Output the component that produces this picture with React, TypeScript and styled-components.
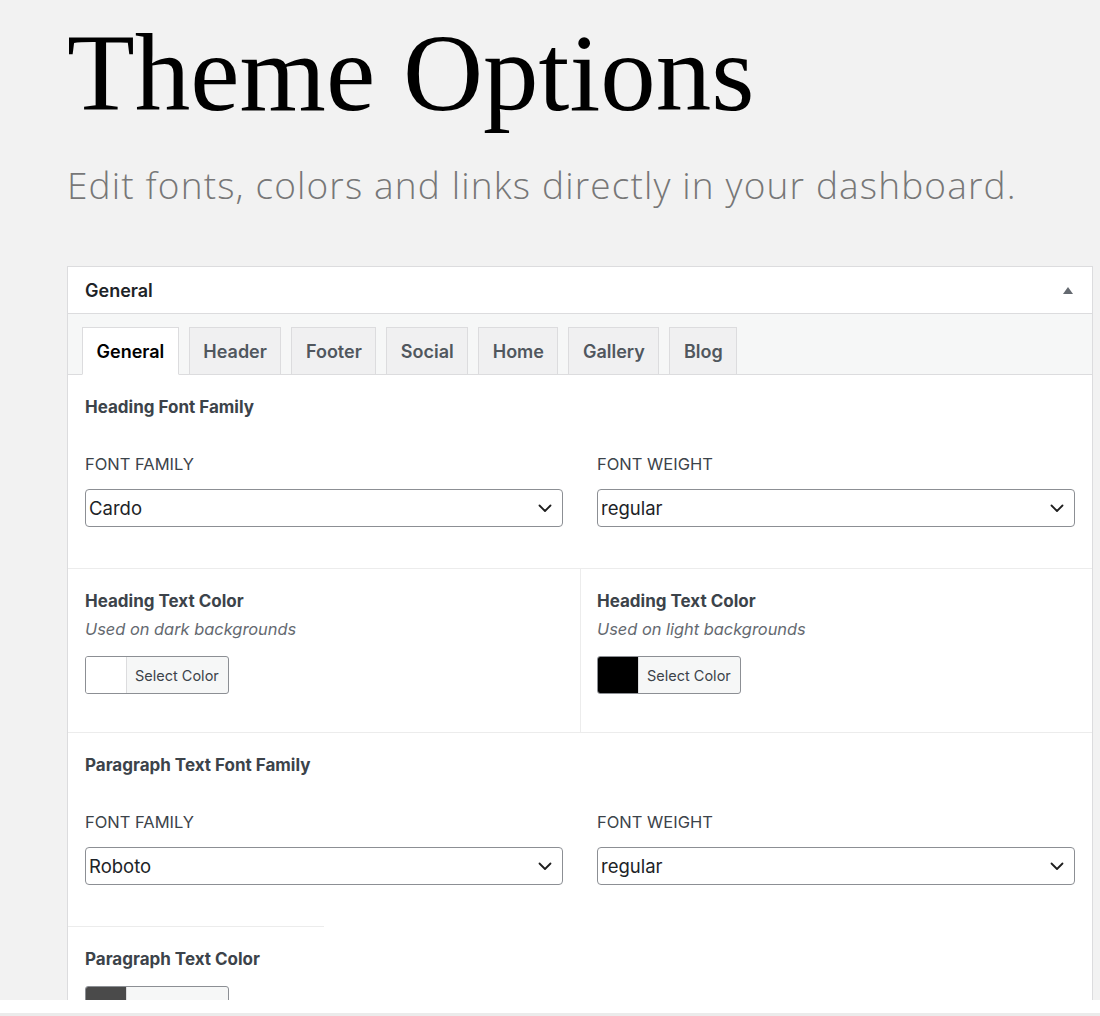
import React from 'react';
import styled, { createGlobalStyle } from 'styled-components';

const GlobalStyle = createGlobalStyle`
  body {
    margin: 0;
    background: #f2f2f2;
    font-family: Inter, "Liberation Sans", Arial, sans-serif;
  }
`;

const Page = styled.div`
  width: 1100px;
  height: 1016px;
  display: flex;
  flex-direction: column;
`;

const Main = styled.div`
  flex: 1;
  overflow: hidden;
  padding-left: 67px;
`;

const Title = styled.h1`
  margin: 0;
  padding-top: 17px;
  font-family: "Liberation Serif", "Times New Roman", serif;
  font-weight: 400;
  font-size: 111px;
  line-height: 1;
  color: #000;
`;

const Subtitle = styled.p`
  margin: 35px 0 0;
  font-family: "Open Sans", sans-serif;
  font-weight: 300;
  font-size: 37px;
  line-height: 1.2;
  letter-spacing: 1.15px;
  color: #777;
`;

const Panel = styled.div`
  margin-top: 59px;
  width: 1024px;
  background: #fff;
  border: 1px solid #dcdcde;
`;

const PanelHead = styled.div`
  height: 46px;
  padding: 0 17px;
  display: flex;
  align-items: center;
  justify-content: space-between;
  border-bottom: 1px solid #dcdcde;
  font-size: 18px;
  font-weight: 600;
  color: #1d2327;
`;

const Caret = styled.span`
  width: 0;
  height: 0;
  margin-right: 2px;
  border-left: 5px solid transparent;
  border-right: 5px solid transparent;
  border-bottom: 7px solid #646970;
`;

const TabStrip = styled.div`
  display: flex;
  gap: 10px;
  padding: 13px 14px 0;
  background: #f6f7f7;
  border-bottom: 1px solid #dcdcde;
`;

const Tab = styled.div<{ $active?: boolean }>`
  height: 46px;
  padding: 0 13.5px;
  display: flex;
  align-items: center;
  margin-bottom: -1px;
  border: 1px solid #dcdcde;
  border-bottom-color: ${p => (p.$active ? '#fff' : '#dcdcde')};
  background: ${p => (p.$active ? '#fff' : '#f0f0f1')};
  color: ${p => (p.$active ? '#000' : '#50575e')};
  font-size: 18px;
  font-weight: 600;
`;

const Section = styled.div<{ $open?: boolean }>`
  padding: 22px 17px 41px;
  border-bottom: ${p => (p.$open ? 'none' : '1px solid #ececec')};
`;

const SectionTitle = styled.div`
  font-size: 17px;
  font-weight: 700;
  line-height: 20px;
  color: #3c434a;
`;

const Fields = styled.div`
  display: grid;
  grid-template-columns: 1fr 1fr;
  gap: 34px;
  margin-top: 37px;
`;

const Field = styled.div`
  display: flex;
  flex-direction: column;
  gap: 15px;
`;

const Label = styled.div`
  font-size: 16.5px;
  line-height: 20px;
  color: #3c434a;
  text-transform: uppercase;
`;

const Select = styled.div`
  height: 38px;
  box-sizing: border-box;
  display: flex;
  align-items: center;
  justify-content: space-between;
  padding: 0 10px 0 3px;
  border: 1px solid #8c8f94;
  border-radius: 4px;
  font-size: 18.5px;
  color: #1d2327;
`;

const ColorRow = styled.div`
  display: grid;
  grid-template-columns: 1fr 1fr;
  border-bottom: 1px solid #ececec;
`;

const ColorCell = styled.div<{ $divided?: boolean }>`
  display: flex;
  flex-direction: column;
  align-items: flex-start;
  padding: 22px 17px 38px ${p => (p.$divided ? '16px' : '17px')};
  border-left: ${p => (p.$divided ? '1px solid #ececec' : 'none')};
`;

const Hint = styled.div`
  margin-top: 8px;
  font-size: 16.4px;
  line-height: 20px;
  font-style: italic;
  color: #646970;
`;

const ColorButton = styled.div`
  margin-top: 17px;
  display: flex;
  height: 38px;
  box-sizing: border-box;
  border: 1px solid #8c8f94;
  border-radius: 3px;
  overflow: hidden;
  background: #f6f7f7;
`;

const Swatch = styled.span<{ $color: string }>`
  width: 40px;
  background: ${p => p.$color};
  border-right: 1px solid #dcdcde;
`;

const SwatchText = styled.span`
  padding: 0 9px 0 8px;
  display: flex;
  align-items: center;
  font-size: 14.5px;
  color: #3c434a;
`;

const ShortRule = styled.div`
  width: 256px;
  border-top: 1px solid #ececec;
`;

const LastCell = styled.div`
  display: flex;
  flex-direction: column;
  align-items: flex-start;
  padding: 22px 17px;
`;

const Footer = styled.div`
  height: 13px;
  background: #fff;
  border-bottom: 3px solid #ebebeb;
`;

const Chevron = () => (
  <svg width="14" height="9" viewBox="0 0 14 9" fill="none">
    <path d="M1.5 1.5 7 7l5.5-5.5" stroke="#1e1e1e" strokeWidth="1.8" strokeLinecap="round" strokeLinejoin="round" />
  </svg>
);

const tabs = ['General', 'Header', 'Footer', 'Social', 'Home', 'Gallery', 'Blog'];

function FontFields({ family }: { family: string }) {
  return (
    <Fields>
      <Field>
        <Label>Font Family</Label>
        <Select>
          {family}
          <Chevron />
        </Select>
      </Field>
      <Field>
        <Label>Font Weight</Label>
        <Select>
          regular
          <Chevron />
        </Select>
      </Field>
    </Fields>
  );
}

function ColorPicker({ color }: { color: string }) {
  return (
    <ColorButton>
      <Swatch $color={color} />
      <SwatchText>Select Color</SwatchText>
    </ColorButton>
  );
}

export default function App() {
  return (
    <Page>
      <GlobalStyle />
      <Main>
        <Title>Theme Options</Title>
        <Subtitle>Edit fonts, colors and links directly in your dashboard.</Subtitle>
        <Panel>
          <PanelHead>
            General
            <Caret />
          </PanelHead>
          <TabStrip>
            {tabs.map((t, i) => (
              <Tab key={t} $active={i === 0}>{t}</Tab>
            ))}
          </TabStrip>
          <Section>
            <SectionTitle>Heading Font Family</SectionTitle>
            <FontFields family="Cardo" />
          </Section>
          <ColorRow>
            <ColorCell>
              <SectionTitle>Heading Text Color</SectionTitle>
              <Hint>Used on dark backgrounds</Hint>
              <ColorPicker color="#fff" />
            </ColorCell>
            <ColorCell $divided>
              <SectionTitle>Heading Text Color</SectionTitle>
              <Hint>Used on light backgrounds</Hint>
              <ColorPicker color="#000" />
            </ColorCell>
          </ColorRow>
          <Section $open>
            <SectionTitle>Paragraph Text Font Family</SectionTitle>
            <FontFields family="Roboto" />
          </Section>
          <ShortRule />
          <LastCell>
            <SectionTitle>Paragraph Text Color</SectionTitle>
            <ColorPicker color="#4a4a4a" />
          </LastCell>
        </Panel>
      </Main>
      <Footer />
    </Page>
  );
}
